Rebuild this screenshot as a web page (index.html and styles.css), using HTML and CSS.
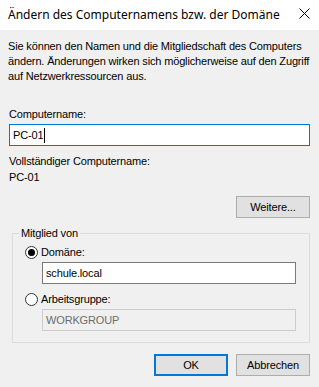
FILE: index.html
```html
<!DOCTYPE html>
<html>
    <head>
        <title>Ändern des Computernamens bzw. der Domäne</title>
        <meta charset="utf-8" />
        <link rel="stylesheet" href="styles.css">
    </head>
    <body>
        <div class="titlebar">
            <span class="title">Ändern des Computernamens bzw. der Domäne</span>
            <svg class="close" width="11" height="11" viewBox="0 0 11 11">
                <path d="M0.5 0.5 L10.5 10.5 M10.5 0.5 L0.5 10.5" stroke="#000" stroke-width="1" fill="none" />
            </svg>
        </div>
        <div class="content">
            <p class="intro">
                Sie können den Namen und die Mitgliedschaft des Computers<br>
                ändern. Änderungen wirken sich möglicherweise auf den Zugriff<br>
                auf Netzwerkressourcen aus.
            </p>
            <div class="label name-label">Computername:</div>
            <div class="textbox focused">PC-01<span class="caret"></span></div>
            <div class="label full-label">Vollständiger Computername:</div>
            <div class="label">PC-01</div>
            <div class="row-right more-row">
                <div class="btn">Weitere...</div>
            </div>
            <fieldset class="group">
                <legend>Mitglied von</legend>
                <div class="option first">
                    <span class="radio checked"></span>
                    <span>Domäne:</span>
                </div>
                <div class="textbox indented">schule.local</div>
                <div class="option">
                    <span class="radio"></span>
                    <span>Arbeitsgruppe:</span>
                </div>
                <div class="textbox indented disabled">WORKGROUP</div>
            </fieldset>
            <div class="row-right actions">
                <div class="btn default">OK</div>
                <div class="btn">Abbrechen</div>
            </div>
        </div>
    </body>
</html>
```

FILE: styles.css
```css
html,
body {
    margin: 0;
    padding: 0;
    background-color: #f0f0f0;
    font-family: 'Liberation Sans', Arial, sans-serif;
    font-size: 11px;
    letter-spacing: -0.15px;
    color: #000;
}

.titlebar {
    height: 30px;
    background-color: #fff;
    display: flex;
    align-items: center;
    justify-content: space-between;
    padding: 0 9px 0 8px;
}

.title {
    font-family: 'Noto Sans', sans-serif;
    font-size: 12px;
    letter-spacing: 0;
    line-height: 16px;
    margin-top: -1px;
}

.close {
    margin-top: -4px;
}

.content {
    padding: 0 9px 0 9px;
}

.intro {
    margin: 9px 0 0 -1px;
    line-height: 15px;
    white-space: nowrap;
}

.label {
    line-height: 15px;
}

.name-label {
    margin-top: 23px;
    margin-bottom: 2px;
}

.full-label {
    margin-top: 8px;
    margin-bottom: 1px;
}

.textbox {
    height: 22px;
    box-sizing: border-box;
    border: 1px solid #7a7a7a;
    background-color: #fff;
    padding: 0 3px;
    line-height: 20px;
    display: flex;
    align-items: center;
}

.textbox.focused {
    border-color: #0078d7;
}

.caret {
    display: inline-block;
    width: 1px;
    height: 15px;
    background-color: #000;
    margin-left: 1px;
}

.textbox.disabled {
    background-color: #f0f0f0;
    border-color: #cccccc;
    color: #6d6d6d;
}

.row-right {
    display: flex;
    justify-content: flex-end;
    gap: 8px;
}

.more-row {
    margin-top: 11px;
}

.btn {
    width: 74px;
    height: 22px;
    box-sizing: border-box;
    border: 1px solid #adadad;
    background-color: #e1e1e1;
    text-align: center;
    line-height: 20px;
}

.btn.default {
    border: 2px solid #0078d7;
    line-height: 18px;
}

.group {
    margin: 8px 0 0 3px;
    padding: 0 0 11px 0;
    border: 1px solid #dcdcdc;
    min-width: 0;
}

.group legend {
    margin-left: 6px;
    padding: 0 2px;
    line-height: 15px;
}

.option {
    display: flex;
    align-items: center;
    gap: 3px;
    margin-left: 12px;
    line-height: 15px;
    margin-top: 8px;
    margin-bottom: 2px;
}

.option.first {
    margin-top: 4px;
}

.radio {
    width: 13px;
    height: 13px;
    box-sizing: border-box;
    border: 1px solid #333;
    border-radius: 50%;
    background-color: #fff;
    display: flex;
    align-items: center;
    justify-content: center;
}

.radio.checked::after {
    content: '';
    width: 7px;
    height: 7px;
    border-radius: 50%;
    background-color: #000;
}

.indented {
    margin-left: 29px;
    margin-right: 13px;
}

.actions {
    margin-top: 11px;
}
```
